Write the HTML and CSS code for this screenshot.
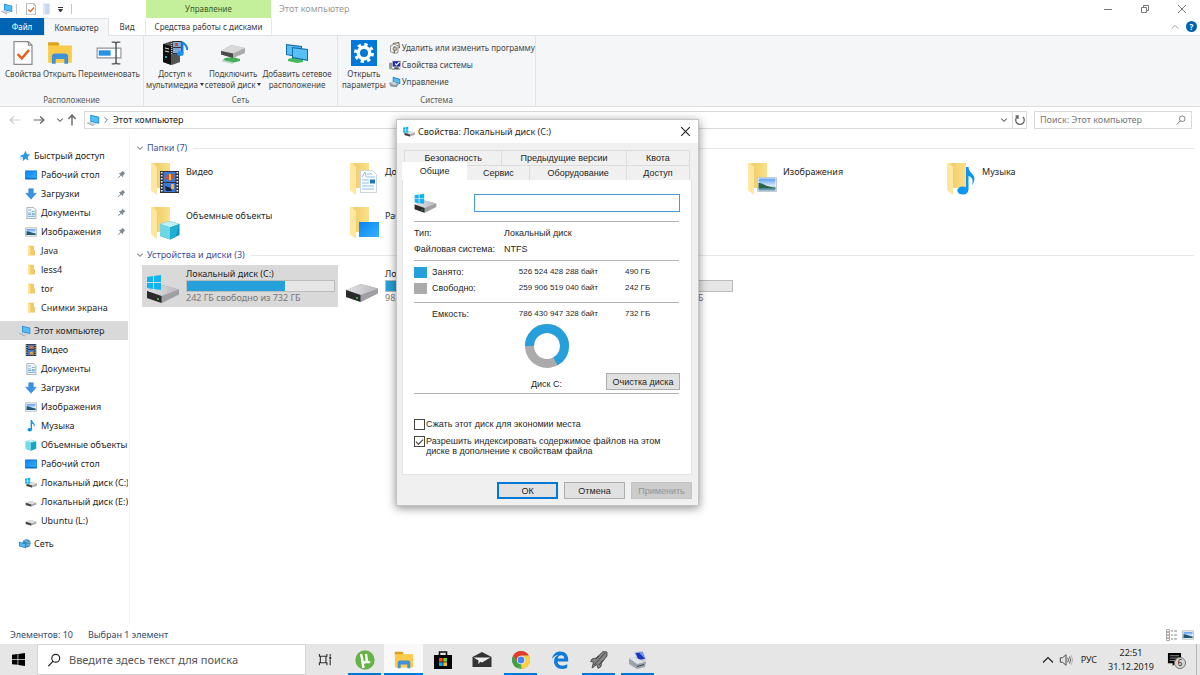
FILE: index.html
```html
<!DOCTYPE html>
<html lang="ru">
<head>
  <meta charset="UTF-8">
  <meta name="viewport" content="width=device-width, initial-scale=1.0">
  <title>Этот компьютер</title>
  <link rel="stylesheet" href="styles.css">
</head>
<body>
  <!-- Icon sprite -->
  <svg class="sprite" aria-hidden="true">
    <defs>
      <linearGradient id="g-folder" x1="0" x2="1"><stop offset="0" stop-color="#ffe9a6"/><stop offset=".3" stop-color="#f1cf6d"/><stop offset="1" stop-color="#fde08a"/></linearGradient>
      <linearGradient id="g-blue" x1="0" y1="0" x2="1" y2="1"><stop offset="0" stop-color="#0a84f0"/><stop offset="1" stop-color="#35b2ff"/></linearGradient>
      <linearGradient id="g-sky" x1="0" y1="0" x2="0" y2="1"><stop offset="0" stop-color="#5b9cf5"/><stop offset=".6" stop-color="#d6eafc"/><stop offset="1" stop-color="#3e7f9c"/></linearGradient>
      <linearGradient id="g-disk" x1="0" x2="1"><stop offset="0" stop-color="#e4e4e6"/><stop offset="1" stop-color="#b9b9bc"/></linearGradient>
    </defs>
    <symbol id="i-pc" viewBox="0 0 16 16"><path d="M4 1l11 2.500v8.500l-11-2.500z" fill="#1a8ad8"/><path d="M5 2.300l9 2v6.400l-9-2z" fill="#55bdf4"/><path d="M0 10.500l4-1 9 2.800-5 2z" fill="#c9d2d9"/><path d="M0 10.500l8 3.800v.9l-8-3.800z" fill="#8b979f"/></symbol>
    <symbol id="i-check" viewBox="0 0 16 20"><path d="M.5.500h12l3 3v16H.5z" fill="#fff" stroke="#8a8a8a"/><path d="M12.500.500v3h3" fill="none" stroke="#8a8a8a"/><path d="M3.500 11l3.500 3.500 6-7" fill="none" stroke="#ea5b21" stroke-width="2"/></symbol>
    <symbol id="i-page" viewBox="0 0 16 20"><path d="M3 1h11v18H3z" fill="#c7d7ee"/><path d="M3 1l4 2v16H3z" fill="#dde7f5"/></symbol>
    <symbol id="i-open" viewBox="0 0 24 22"><path d="M1 1h9l2 2h-1v3H1z" fill="#dba21a"/><path d="M1 4h22v16H1z" fill="#fccb4c"/><path d="M4.500 21v-8l2-1.500h11l2 1.500v8H16v-4.500H8V21z" fill="#3f91d8"/></symbol>
    <symbol id="i-rename" viewBox="0 0 24 22"><path d="M1 6.500h22v9H1z" fill="#fff" stroke="#8a9399"/><path d="M2.500 8.500h11v5h-11z" fill="#2592e8"/><path d="M14.500 1h3l1 1 1-1h3M18.500 2v18M14.500 21h3l1-1 1 1h3" fill="none" stroke="#505050" stroke-width="1.300"/></symbol>
    <symbol id="i-media" viewBox="0 0 26 26"><path d="M1 4l9-3 8 3v18l-8 3-9-3z" fill="#555"/><path d="M1 4l8 2v19l-8-3z" fill="#111"/><path d="M3 8l4 1M3 11l4 1" stroke="#ddd"/><circle cx="4" cy="17" r="1" fill="#2de"/><path d="M9 1h12v13H9z" fill="#333"/><path d="M11 2h8v5h-8zM11 8h8v5h-8z" fill="#7ea7d8"/><path d="M13 3h3v3h-3z" fill="#d64c35"/><path d="M9.700 1v13M20.300 1v13" stroke="#ddd" stroke-dasharray="1 1"/><path d="M20.500 2v11M21 2c1 3 5 3 4 8" fill="none" stroke="#1583e0" stroke-width="2"/><ellipse cx="18.500" cy="13.500" rx="3.200" ry="2.500" fill="#1b91ed"/></symbol>
    <symbol id="i-netdrive" viewBox="0 0 26 22"><path d="M5 16l8-1 7 2v2l-8 2-9-3z" fill="#41b15a"/><path d="M2 18l11 2v2L2 19.500z" fill="#b9d5bd"/><path d="M1 9l10-6 14 3v5l-12 5-12-4z" fill="#aaa"/><path d="M1 9l10-6 14 3-12 5.500z" fill="#d8d8d8"/><path d="M1 9l12 2.500V16L1 12.500z" fill="#4a4a4a"/></symbol>
    <symbol id="i-netplace" viewBox="0 0 26 22"><path d="M4 17l8-2 7 3v2l-6 1-9-2z" fill="#43b95b"/><path d="M2 2l16 2v12L2 13z" fill="#146da9"/><path d="M3 3.200l14 1.800v9.500L3 12.200z" fill="#55bdf4"/><path d="M8 5l16 2v12L8 16z" fill="#146da9"/><path d="M9 6.200l14 1.900v9.500L9 15.100z" fill="#58c0f6"/></symbol>
    <symbol id="i-gear" viewBox="0 0 26 26"><path d="M0 0h26v26H0z" fill="#0078d7"/><circle cx="13" cy="13" r="8.500" fill="none" stroke="#fff" stroke-width="3" stroke-dasharray="3.340 3.340"/><circle cx="13" cy="13" r="5.700" fill="none" stroke="#fff" stroke-width="3.400"/></symbol>
    <symbol id="i-uninstall" viewBox="0 0 16 16"><path d="M2 5l5-2 5 2v9l-5 1-5-2z" fill="#eee" stroke="#777"/><path d="M7 6v9M5 2l8-1 1 7" fill="none" stroke="#7b6a55" stroke-width="1.500"/><circle cx="8" cy="9" r="2.500" fill="#c8b9a2" stroke="#665"/></symbol>
    <symbol id="i-sysprops" viewBox="0 0 16 16"><path d="M4 2h12v9H4z" fill="#d5d5d5"/><path d="M5 3h10v7H5z" fill="#1726b4"/><path d="M8 6l2 2 4-4" fill="none" stroke="#fff" stroke-width="1.500"/><path d="M0 5h4v8H0z" fill="#999"/><path d="M7 11h6v2h2v1H4v-1h3z" fill="#555"/><path d="M1 13h4" stroke="#4bb34b"/></symbol>
    <symbol id="i-manage" viewBox="0 0 16 16"><path d="M5 1l10 3v7L5 8z" fill="#1580c8"/><path d="M6 2.500l8 2.400v4.700L6 7.200z" fill="#57bdf2"/><path d="M0 9l7-2 6 4-3 4-8-1z" fill="#8b9aa5"/><path d="M1 9l6-1 4 3-4 1z" fill="#d3dbe1"/></symbol>
    <symbol id="i-star" viewBox="0 0 16 16"><path d="M9 1l1.500 4.500L15 6l-3.500 3.200L13 14l-4.500-2.500L5 15l.5-5L1 8l5-2z" fill="#2596e8"/><path d="M1 9.500l3-.5M1.500 12.500l3-1.500" stroke="#74bdf0"/></symbol>
    <symbol id="i-desktop" viewBox="0 0 16 16"><path d="M.5 2.500h15v11H.5z" fill="url(#g-blue)" stroke="#0b74ca"/><path d="M1 12.500h14" stroke="#0a5fa8"/></symbol>
    <symbol id="i-down" viewBox="0 0 16 16"><path d="M5 1h6v6h4l-7 8-7-8h4z" fill="#3b93e6" stroke="#2a78c4" stroke-width=".7"/></symbol>
    <symbol id="i-doc" viewBox="0 0 16 16"><path d="M2.500.500h9l3 3v12h-12z" fill="#f2f6f9" stroke="#8a98a5"/><path d="M4 4h4M9 6h4M4 8h4M4 10h4M4 12.500h9" stroke="#4f9bd0"/><path d="M9 8h4v3H9z" fill="#7eb8df"/></symbol>
    <symbol id="i-picture" viewBox="0 0 16 16"><path d="M.5 2.500h15v11H.5z" fill="#fff" stroke="#9aa4aa"/><path d="M2 4h12v8H2z" fill="url(#g-sky)"/><path d="M2 7c4 0 6 2 12 3v2H2z" fill="#245878"/></symbol>
    <symbol id="i-folder-s" viewBox="0 0 16 16"><path d="M4 1h8v13H4z" fill="#f2cb65"/><path d="M4 1l3 2v12l-3-1z" fill="#ffe49a"/><path d="M12 7h1v7h-1z" fill="#e3b64b"/></symbol>
    <symbol id="i-film" viewBox="0 0 16 16"><path d="M1 0h14v16H1z" fill="#2c2c30"/><path d="M4 1h8v6H4zM4 8h8v7H4z" fill="#4779c8"/><path d="M7 2l3 1 1 3H6z" fill="#dc7a2c"/><path d="M6 11l4-1 1 4H7z" fill="#e2a63b"/><path d="M2.500 1v15M13.500 1v15" stroke="#e8e8e8" stroke-width="1.400" stroke-dasharray="1.500 1.500"/></symbol>
    <symbol id="i-note" viewBox="0 0 16 16"><path d="M7.500 0h1.800c0 3.500 4.700 3.500 3.400 8.500h-.9c.5-2.500-1-3.300-2.500-4V13H7.500z" fill="#0b93f0"/><ellipse cx="6.300" cy="13" rx="3" ry="2.300" fill="#0b93f0"/></symbol>
    <symbol id="i-cube" viewBox="0 0 16 16"><path d="M1 3l7-2 7 2v10l-7 2.500L1 13z" fill="#18a5c5"/><path d="M1 3l7 1.800V15.500L1 13z" fill="#74dbe8"/><path d="M1 3l7-2 7 2-7 1.800z" fill="#c9f4f7"/></symbol>
    <symbol id="i-drive-s" viewBox="0 0 16 16"><path d="M1 9l6-2.500 8 2v3L8 14 1 12z" fill="#aaa"/><path d="M1 9l6-2.500 8 2-6.500 2.700z" fill="#dfdfdf"/><path d="M1 9l7.300 2.200V14L1 12z" fill="#444"/></symbol>
    <symbol id="i-drive-win" viewBox="0 0 16 16"><use href="#i-drive-s" x="1" width="16" height="16"/><path d="M0 2l3-.5V5H0zM3.600 1.400L7 1v4H3.600zM0 5.600h3V9l-3-.5zM3.600 5.600H7V9l-3.400-.2z" fill="#14b4f0"/></symbol>
    <symbol id="i-network" viewBox="0 0 16 16"><circle cx="10" cy="7" r="5.500" fill="#3f8fc4"/><path d="M7 3c3 1 5 3 7 3M6 9c3 1 5 1 8-1" stroke="#a8d6ef" fill="none"/><path d="M0 5l9 2.500v6L0 11z" fill="#1580c8"/><path d="M1 6.300l7 2v4L1 10.300z" fill="#57bdf2"/></symbol>
    <symbol id="i-pin" viewBox="0 0 12 12"><path d="M7.500 1L11 4.500l-1 .5-1.500 1.700L8 9.500 5.500 7.300 2 10.800l-.8-.8L4.700 6.500 2.500 4l2.800-.5L7 2z" fill="#7d8992"/></symbol>
    <symbol id="i-folder" viewBox="0 0 30 34"><path d="M1 1h19v25H7v6z" fill="url(#g-folder)"/><path d="M1 1l6 4v28l-6-4.500z" fill="#ffe7a0"/></symbol>
    <symbol id="i-f-video" viewBox="0 0 30 34"><use href="#i-folder" width="30" height="34"/><path d="M10 9h19v22H10z" fill="#303036"/><path d="M13.500 10h12v10h-12zM13.500 21h12v9h-12z" fill="#3f78d6"/><path d="M17 12h7v3l-3 4-5-2z" fill="#d2502e"/><path d="M19 12h2v6h-2z" fill="#e9c03e"/><path d="M15 24l6 2 1 3h-6z" fill="#223"/><path d="M21 22h3v5h-3z" fill="#f0b33a"/><path d="M11.700 10v21M27.300 10v21" stroke="#f1f1f1" stroke-width="1.700" stroke-dasharray="1.500 1.500"/></symbol>
    <symbol id="i-f-doc" viewBox="0 0 30 34"><use href="#i-folder" width="30" height="34"/><path d="M11.500 8.500h12l4 4v18h-16z" fill="#fcfdff" stroke="#cdd5dd"/><path d="M13 15l3-5 1 5M18 12h5M18 15h8M13 18h7M13 21h7M13 24h12M13 27h12" stroke="#8fc2ea" fill="none"/><path d="M21 17.500h5v4h-5z" fill="#1d77bd"/></symbol>
    <symbol id="i-f-down" viewBox="0 0 30 34"><use href="#i-folder" width="30" height="34"/><path d="M17 12h7v9h5l-8.500 10L12 21h5z" fill="#2f8ee5"/></symbol>
    <symbol id="i-f-pic" viewBox="0 0 30 34"><use href="#i-folder" width="30" height="34"/><path d="M10.500 15.500h19v14h-19z" fill="#fff" stroke="#c2cbd2"/><path d="M11.500 16.500h17v12h-17z" fill="url(#g-sky)"/><path d="M11.500 21c5 0 8 4 17 4.500v1h-17z" fill="#2b6248"/></symbol>
    <symbol id="i-f-music" viewBox="0 0 30 34"><use href="#i-folder" width="30" height="34"/><path d="M20 5h2.500c0 6 7 7 5.800 13-.3 2-1.200 4-2.300 5.500 1.500-5 .4-8.500-3.500-9.500V28H20z" fill="#0b95f5"/><ellipse cx="16.800" cy="28.500" rx="5.500" ry="4" fill="#0b95f5"/></symbol>
    <symbol id="i-f-cube" viewBox="0 0 30 34"><use href="#i-folder" width="30" height="34"/><path d="M10 18l10-3 9.500 3v11l-9.500 4.500L10 30z" fill="#0d93b8"/><path d="M10 18l10 3.500v12L10 30z" fill="#6fd6e6"/><path d="M10 18l10-3 9.500 3-9.500 3.500z" fill="#bdf0f5"/><path d="M20 21.500l9.500-3.500-4 13-5.500 2.500z" fill="#20aed2"/></symbol>
    <symbol id="i-f-desk" viewBox="0 0 30 34"><use href="#i-folder" width="30" height="34"/><path d="M10 16h20v15H10z" fill="url(#g-blue)"/></symbol>
    <symbol id="i-drive" viewBox="0 0 34 34"><path d="M1 19l15-6 17 4.500v5L16 31 1 26z" fill="#9fa0a3"/><path d="M1 19l15-6 17 4.500L15.500 24z" fill="url(#g-disk)"/><path d="M1 19l14.500 5v7L1 26z" fill="#2b2b2d"/><circle cx="12" cy="27" r="1" fill="#4cd04c"/></symbol>
    <symbol id="i-drive-c" viewBox="0 0 34 34"><use href="#i-drive" y="1" width="34" height="34"/><path d="M1 6l6-.9v6H1zM8 5l7-1v7H8zM1 12h6v6l-6-.9zM8 12h7v7l-7-.9z" fill="#12b5f2"/></symbol>
    <symbol id="i-back" viewBox="0 0 12 12"><path d="M11.500 6H1M5 2.500L1 6l4 3.500" fill="none" stroke="currentColor" stroke-width="1.200"/></symbol>
    <symbol id="i-fwd" viewBox="0 0 12 12"><path d="M.5 6H11M7 2.500L11 6 7 9.500" fill="none" stroke="currentColor" stroke-width="1.200"/></symbol>
    <symbol id="i-up" viewBox="0 0 12 12"><path d="M6 11.500V1M2.500 5L6 1l3.500 4" fill="none" stroke="currentColor" stroke-width="1.400"/></symbol>
    <symbol id="i-chev" viewBox="0 0 12 12"><path d="M2 4l4 4 4-4" fill="none" stroke="currentColor" stroke-width="1.600"/></symbol>
    <symbol id="i-chev-r" viewBox="0 0 12 12"><path d="M4 2l4 4-4 4" fill="none" stroke="currentColor" stroke-width="1.400"/></symbol>
    <symbol id="i-chev-u" viewBox="0 0 12 12"><path d="M1 8.500l5-5 5 5" fill="none" stroke="currentColor" stroke-width="1.200"/></symbol>
    <symbol id="i-refresh" viewBox="0 0 12 12"><path d="M3.200 2.800A4.300 4.300 0 1 0 9 3M1.500 2H4v3" fill="none" stroke="currentColor" stroke-width="1.300"/></symbol>
    <symbol id="i-search" viewBox="0 0 16 16"><circle cx="10" cy="6" r="4.500" fill="none" stroke="currentColor" stroke-width="1.300"/><path d="M7 9.300L1.500 15" stroke="currentColor" stroke-width="1.500"/></symbol>
    <symbol id="i-close" viewBox="0 0 12 12"><path d="M2 2l8 8M10 2l-8 8" stroke="currentColor"/></symbol>
    <symbol id="i-min" viewBox="0 0 12 12"><path d="M2 6.500h8" stroke="currentColor"/></symbol>
    <symbol id="i-restore" viewBox="0 0 12 12"><path d="M2.500 4.500h5v5h-5zM4.500 4.500v-2h5v5h-2" fill="none" stroke="currentColor"/></symbol>
    <symbol id="i-win" viewBox="0 0 14 14"><path d="M0 2l6-.8v5.300H0zM6.800 1.100L14 0v6.500H6.800zM0 7.300h6v5.400L0 12zM6.800 7.300H14V14l-7.200-1z" fill="#000"/></symbol>
    <symbol id="i-taskview" viewBox="0 0 16 16"><path d="M1.500 2v2.500h8V2M1.500 14v-2.500h8V14M2.500 4.500v7M8.500 4.500v7M13 2v3M13 8v6" fill="none" stroke="#333" stroke-width="1.200"/><circle cx="13" cy="6.500" r="1.300" fill="#333"/></symbol>
    <symbol id="i-utorrent" viewBox="0 0 20 20"><circle cx="10" cy="10" r="9.700" fill="#65b345"/><path d="M6 4l1.500 6.500c.8 3 3.500 2.500 4.300 0L11 4M11.500 10c1 3 2.500 2.500 3.500 1.500M7 10l1.500 8" fill="none" stroke="#fff" stroke-width="2.400"/></symbol>
    <symbol id="i-store" viewBox="0 0 20 20"><path d="M6.500 6V2h7v4" fill="none" stroke="#111" stroke-width="1.600"/><path d="M1 5h18v14H1z" fill="#050505"/><path d="M6 8h3.700v3.700H6z" fill="#f1511b"/><path d="M10.300 8H14v3.700h-3.700z" fill="#80cc28"/><path d="M6 12.300h3.700V16H6z" fill="#00adef"/><path d="M10.300 12.300H14V16h-3.700z" fill="#fbbc09"/></symbol>
    <symbol id="i-mail" viewBox="0 0 20 20"><path d="M.5 7L10 2l9.500 5v10H.5z" fill="#333"/><path d="M1.500 7.500h17L10 12.500l-1.700-.8-2 2.500.2-3.600z" fill="#eee"/></symbol>
    <symbol id="i-chrome" viewBox="0 0 20 20"><circle cx="10" cy="10" r="9" fill="#4caf50"/><path d="M10 10L2.200 5.500A9 9 0 0 1 17.800 5.500z" fill="#e33b2e"/><path d="M2.200 5.500l4.300 7L10 5.500z" fill="#e33b2e"/><path d="M10 10l.5 9A9 9 0 0 0 17.800 5.500H10z" fill="#fdd03b"/><path d="M2.200 5.500L6 12l4 2.500L6 18A9 9 0 0 1 2.200 5.500z" fill="#43a047"/><circle cx="10" cy="10" r="4.200" fill="#fff"/><circle cx="10" cy="10" r="3.400" fill="#4286f4"/></symbol>
    <symbol id="i-edge" viewBox="0 0 20 20"><path d="M2 9c.8-5 4.200-7.500 8.200-7.500 5 0 8 3.500 8 8.300v1.700H7.500c.2 4.800 6.500 5 9.700 2.700v3.600c-5.500 3-13.200.5-13.200-6.500 0-3 1.600-5.200 4.500-6.500C5.500 5.300 3.500 6.800 2 9zM7.700 8.500h6.500c0-4.600-6-4-6.500 0z" fill="#0f7bd8"/></symbol>
    <symbol id="i-rocket" viewBox="0 0 20 20"><path d="M18 2l-4-.5L7 8l-4 1-1.500 2.500 3 .5L3 18l5-3.500 1 4 3-2 .5-3.500L18 6z" fill="#858585" stroke="#3a3a3a" stroke-width=".8"/><path d="M16 3L5 15M10 6l-3 3M14 10l-4 5" stroke="#444" fill="none"/></symbol>
    <symbol id="i-oldpc" viewBox="0 0 20 20"><path d="M6 2l9-1 3.500 9-9 2z" fill="#c5cbd3"/><path d="M7.500 3l7-.8 2.500 6.500-6.500 1.300z" fill="#1a35c0"/><path d="M11 2.500l3.500-.3 2.500 6.500z" fill="#7ea0ee"/><path d="M1 8l5-1 12 5-1 5-8 2-8-5z" fill="#9aa3ae"/><path d="M1 8l5-1 11 5-8 2z" fill="#e1e5ea"/><path d="M9 16.500l7-2" stroke="#444"/></symbol>
    <symbol id="i-sound" viewBox="0 0 16 16"><path d="M1.500 5.500H4l4-3.500v12l-4-3.500H1.500z" fill="none" stroke="#333"/><path d="M10 5.500q1.500 2.500 0 5M12 4q2.500 4 0 8" fill="none" stroke="#444"/><path d="M14 2.500q3 5.500 0 11" fill="none" stroke="#aaa"/></symbol>
    <symbol id="i-notify" viewBox="0 0 16 16"><path d="M1 1h14v11H9l-3 3v-3H1z" fill="#000"/><path d="M3 4h10M3 6.500h10M3 9h10" stroke="#999"/></symbol>
    <symbol id="i-list" viewBox="0 0 12 12"><path d="M1.500.500h3v11h-3z" fill="none" stroke="#a9a9a9"/><path d="M2 3h2M2 6h2M2 9h2" stroke="#a25a5a"/><path d="M6 2h2M9 2h3M6 6h2M9 6h3M6 10h2M9 10h3" stroke="#888"/></symbol>
  </svg>

  <div class="explorer">
    <header class="titlebar">
      <div class="quick-access">
        <svg class="icon-sm"><use href="#i-pc"/></svg>
        <span class="divider"></span>
        <svg class="icon-sm"><use href="#i-check"/></svg>
        <svg class="icon-sm"><use href="#i-page"/></svg>
        <button class="qa-more" aria-label="Настройка панели"></button>
        <span class="divider"></span>
      </div>
      <div class="context-title">Управление</div>
      <h1 class="window-title">Этот компьютер</h1>
      <div class="window-controls">
        <button aria-label="Свернуть"><svg class="icon-sm"><use href="#i-min"/></svg></button>
        <button aria-label="Восстановить"><svg class="icon-sm"><use href="#i-restore"/></svg></button>
        <button aria-label="Закрыть"><svg class="icon-sm"><use href="#i-close"/></svg></button>
      </div>
    </header>

    <nav class="ribbon-tabs">
      <a href="#" class="tab-file">Файл</a>
      <a href="#" class="tab-computer">Компьютер</a>
      <a href="#" class="tab-view">Вид</a>
      <a href="#" class="tab-drive">Средства работы с дисками</a>
      <button class="collapse" aria-label="Свернуть ленту"><svg class="icon-xs"><use href="#i-chev-u"/></svg></button>
      <button class="help" aria-label="Справка">?</button>
    </nav>

    <section class="ribbon">
      <div class="ribbon-group group-location">
        <div class="ribbon-items">
          <button class="big-btn"><svg><use href="#i-check"/></svg>Свойства</button>
          <button class="big-btn"><svg><use href="#i-open"/></svg>Открыть</button>
          <button class="big-btn"><svg><use href="#i-rename"/></svg>Переименовать</button>
        </div>
        <div class="group-name">Расположение</div>
      </div>
      <div class="ribbon-group group-network">
        <div class="ribbon-items">
          <button class="big-btn"><svg><use href="#i-media"/></svg>Доступ к<br><span class="drop">мультимедиа</span></button>
          <button class="big-btn"><svg><use href="#i-netdrive"/></svg>Подключить<br><span class="drop">сетевой диск</span></button>
          <button class="big-btn"><svg><use href="#i-netplace"/></svg>Добавить сетевое<br>расположение</button>
        </div>
        <div class="group-name">Сеть</div>
      </div>
      <div class="ribbon-group group-system">
        <div class="ribbon-items">
          <button class="big-btn"><svg><use href="#i-gear"/></svg>Открыть<br>параметры</button>
          <div class="small-btns">
            <button><svg class="icon-sm"><use href="#i-uninstall"/></svg>Удалить или изменить программу</button>
            <button><svg class="icon-sm"><use href="#i-sysprops"/></svg>Свойства системы</button>
            <button><svg class="icon-sm"><use href="#i-manage"/></svg>Управление</button>
          </div>
        </div>
        <div class="group-name">Система</div>
      </div>
    </section>

    <div class="navbar">
      <button class="back" aria-label="Назад"><svg class="icon-sm"><use href="#i-back"/></svg></button>
      <button class="forward" aria-label="Вперед"><svg class="icon-sm"><use href="#i-fwd"/></svg></button>
      <button class="recent" aria-label="Последние"><svg class="icon-xs"><use href="#i-chev"/></svg></button>
      <button class="up" aria-label="Вверх"><svg class="icon-sm"><use href="#i-up"/></svg></button>
      <div class="address">
        <svg class="icon-md"><use href="#i-pc"/></svg>
        <svg class="icon-xs"><use href="#i-chev-r"/></svg>
        <a href="#">Этот компьютер</a>
        <button aria-label="Предыдущие расположения"><svg class="icon-xs"><use href="#i-chev"/></svg></button>
        <button class="refresh" aria-label="Обновить"><svg class="icon-sm"><use href="#i-refresh"/></svg></button>
      </div>
      <label class="search">
        <input type="text" placeholder="Поиск: Этот компьютер" aria-label="Поиск">
        <svg class="icon-search"><use href="#i-search"/></svg>
      </label>
    </div>

    <div class="content">
      <aside class="sidebar">
        <ul>
          <li class="root"><a href="#"><svg class="icon-sm"><use href="#i-star"/></svg>Быстрый доступ</a></li>
          <li><a href="#"><svg class="icon-sm"><use href="#i-desktop"/></svg>Рабочий стол<svg class="pin"><use href="#i-pin"/></svg></a></li>
          <li><a href="#"><svg class="icon-sm"><use href="#i-down"/></svg>Загрузки<svg class="pin"><use href="#i-pin"/></svg></a></li>
          <li><a href="#"><svg class="icon-sm"><use href="#i-doc"/></svg>Документы<svg class="pin"><use href="#i-pin"/></svg></a></li>
          <li><a href="#"><svg class="icon-sm"><use href="#i-picture"/></svg>Изображения<svg class="pin"><use href="#i-pin"/></svg></a></li>
          <li><a href="#"><svg class="icon-sm"><use href="#i-folder-s"/></svg>Java</a></li>
          <li><a href="#"><svg class="icon-sm"><use href="#i-folder-s"/></svg>less4</a></li>
          <li><a href="#"><svg class="icon-sm"><use href="#i-folder-s"/></svg>tor</a></li>
          <li><a href="#"><svg class="icon-sm"><use href="#i-folder-s"/></svg>Снимки экрана</a></li>
        </ul>
        <ul>
          <li class="root selected"><a href="#"><svg class="icon-sm"><use href="#i-pc"/></svg>Этот компьютер</a></li>
          <li><a href="#"><svg class="icon-sm"><use href="#i-film"/></svg>Видео</a></li>
          <li><a href="#"><svg class="icon-sm"><use href="#i-doc"/></svg>Документы</a></li>
          <li><a href="#"><svg class="icon-sm"><use href="#i-down"/></svg>Загрузки</a></li>
          <li><a href="#"><svg class="icon-sm"><use href="#i-picture"/></svg>Изображения</a></li>
          <li><a href="#"><svg class="icon-sm"><use href="#i-note"/></svg>Музыка</a></li>
          <li><a href="#"><svg class="icon-sm"><use href="#i-cube"/></svg>Объемные объекты</a></li>
          <li><a href="#"><svg class="icon-sm"><use href="#i-desktop"/></svg>Рабочий стол</a></li>
          <li><a href="#"><svg class="icon-sm"><use href="#i-drive-win"/></svg>Локальный диск (C:)</a></li>
          <li><a href="#"><svg class="icon-sm"><use href="#i-drive-s"/></svg>Локальный диск (E:)</a></li>
          <li><a href="#"><svg class="icon-sm"><use href="#i-drive-s"/></svg>Ubuntu (L:)</a></li>
        </ul>
        <ul>
          <li class="root"><a href="#"><svg class="icon-sm"><use href="#i-network"/></svg>Сеть</a></li>
        </ul>
      </aside>

      <main class="files">
        <section>
          <h2><svg class="icon-xs"><use href="#i-chev"/></svg>Папки (7)</h2>
          <div class="tiles">
            <a href="#" class="tile"><svg><use href="#i-f-video"/></svg><span>Видео</span></a>
            <a href="#" class="tile"><svg><use href="#i-f-doc"/></svg><span>Документы</span></a>
            <a href="#" class="tile"><svg><use href="#i-f-down"/></svg><span>Загрузки</span></a>
            <a href="#" class="tile"><svg><use href="#i-f-pic"/></svg><span>Изображения</span></a>
            <a href="#" class="tile"><svg><use href="#i-f-music"/></svg><span>Музыка</span></a>
            <a href="#" class="tile"><svg><use href="#i-f-cube"/></svg><span>Объемные объекты</span></a>
            <a href="#" class="tile"><svg><use href="#i-f-desk"/></svg><span>Рабочий стол</span></a>
          </div>
        </section>
        <section>
          <h2><svg class="icon-xs"><use href="#i-chev"/></svg>Устройства и диски (3)</h2>
          <div class="tiles">
            <a href="#" class="tile drive selected">
              <svg><use href="#i-drive-c"/></svg>
              <span>Локальный диск (C:)<span class="bar"><span style="width: 67%"></span></span><small>242 ГБ свободно из 732 ГБ</small></span>
            </a>
            <a href="#" class="tile drive">
              <svg><use href="#i-drive"/></svg>
              <span>Локальный диск (E:)<span class="bar"><span style="width: 50%"></span></span><small>98,2 ГБ свободно из 198 ГБ</small></span>
            </a>
            <a href="#" class="tile drive">
              <svg><use href="#i-drive"/></svg>
              <span>Ubuntu (L:)<span class="bar"><span style="width: 10%"></span></span><small>18,1 ГБ свободно из 20,6 ГБ</small></span>
            </a>
          </div>
        </section>
      </main>
    </div>

    <footer class="statusbar">
      <span>Элементов: 10</span>
      <span>Выбран 1 элемент</span>
      <div class="view-modes">
        <button aria-label="Таблица"><svg class="icon-sm"><use href="#i-list"/></svg></button>
        <button aria-label="Крупные значки"><svg class="icon-sm"><use href="#i-picture"/></svg></button>
      </div>
    </footer>
  </div>

  <!-- Disk properties window -->
  <div class="dialog" role="dialog" aria-labelledby="dialog-title">
    <div class="dialog-title">
      <svg class="icon-sm"><use href="#i-drive-win"/></svg>
      <h2 id="dialog-title">Свойства: Локальный диск (C:)</h2>
      <button aria-label="Закрыть"><svg class="icon-md"><use href="#i-close"/></svg></button>
    </div>
    <div class="dialog-body">
      <div class="tabs tabs-back">
        <button>Безопасность</button>
        <button>Предыдущие версии</button>
        <button>Квота</button>
      </div>
      <div class="tabs tabs-front">
        <button class="active">Общие</button>
        <button>Сервис</button>
        <button>Оборудование</button>
        <button>Доступ</button>
      </div>
      <div class="panel">
        <div class="name-row">
          <svg><use href="#i-drive-c"/></svg>
          <input type="text" aria-label="Метка тома">
        </div>
        <hr>
        <table class="info">
          <tr><td>Тип:</td><td>Локальный диск</td></tr>
          <tr><td>Файловая система:</td><td>NTFS</td></tr>
        </table>
        <hr>
        <table class="usage">
          <tr><td><span class="swatch used"></span></td><td>Занято:</td><td>526 524 428 288 байт</td><td>490 ГБ</td></tr>
          <tr><td><span class="swatch free"></span></td><td>Свободно:</td><td>259 906 519 040 байт</td><td>242 ГБ</td></tr>
        </table>
        <hr>
        <table class="usage">
          <tr><td></td><td>Емкость:</td><td>786 430 947 328 байт</td><td>732 ГБ</td></tr>
        </table>
        <svg class="donut" viewBox="0 0 44 44">
          <circle cx="22" cy="22" r="17.500" fill="none" stroke="#ababab" stroke-width="9"/>
          <circle cx="22" cy="22" r="17.500" fill="none" stroke="#26a0da" stroke-width="9" pathLength="100" stroke-dasharray="67 33" transform="rotate(180 22 22)"/>
        </svg>
        <div class="disk-row">
          <span>Диск C:</span>
          <button class="btn">Очистка диска</button>
        </div>
        <hr>
        <div class="options">
          <label><input type="checkbox"><span>Сжать этот диск для экономии места</span></label>
          <label><input type="checkbox" checked><span>Разрешить индексировать содержимое файлов на этом диске в дополнение к свойствам файла</span></label>
        </div>
      </div>
      <div class="dialog-buttons">
        <button class="btn default">ОК</button>
        <button class="btn">Отмена</button>
        <button class="btn" disabled>Применить</button>
      </div>
    </div>
  </div>

  <div class="taskbar">
    <button class="start" aria-label="Пуск"><svg><use href="#i-win"/></svg></button>
    <label class="task-search">
      <svg><use href="#i-search"/></svg>
      <input type="text" placeholder="Введите здесь текст для поиска" aria-label="Поиск Windows">
    </label>
    <button class="task-view" aria-label="Представление задач"><svg><use href="#i-taskview"/></svg></button>
    <div class="apps">
      <button class="running" aria-label="uTorrent"><svg><use href="#i-utorrent"/></svg></button>
      <button class="running current" aria-label="Проводник"><svg><use href="#i-open"/></svg></button>
      <button aria-label="Магазин"><svg><use href="#i-store"/></svg></button>
      <button aria-label="Почта"><svg><use href="#i-mail"/></svg></button>
      <button class="running" aria-label="Chrome"><svg><use href="#i-chrome"/></svg></button>
      <button aria-label="Edge"><svg><use href="#i-edge"/></svg></button>
      <button class="running" aria-label="Ракета"><svg><use href="#i-rocket"/></svg></button>
      <button class="running" aria-label="Компьютер"><svg><use href="#i-oldpc"/></svg></button>
    </div>
    <div class="tray">
      <button aria-label="Скрытые значки"><svg class="icon-sm"><use href="#i-chev-u"/></svg></button>
      <button aria-label="Громкость"><svg class="icon-lg"><use href="#i-sound"/></svg></button>
      <span class="lang">РУС</span>
      <time class="clock">22:51<br>31.12.2019</time>
      <button class="notify" aria-label="Уведомления"><svg><use href="#i-notify"/></svg><span class="badge">6</span></button>
      <span class="show-desktop"></span>
    </div>
  </div>
</body>
</html>
```
FILE: styles.css
```css
*, *::before, *::after {
  box-sizing: border-box;
  margin: 0;
  padding: 0;
}

:root {
  --accent: #26a0da;
  --blue: #0078d7;
  --border: #d9d9d9;
  --selected: #d9d9d9;
  --ribbon: #f5f6f7;
  --ui-font: 'Noto Sans', 'Open Sans', sans-serif;
  --dialog-font: 'Liberation Sans', Arial, sans-serif;
}

body {
  font-family: var(--ui-font);
  font-size: 9px;
  line-height: 12px;
  color: #1f1f1f;
  background: #fff;
  min-height: 100vh;
  display: flex;
  flex-direction: column;
  overflow: hidden;
}

button, input {
  font: inherit;
  color: inherit;
  background: none;
  border: 0;
  outline: 0;
}

a {
  color: inherit;
  text-decoration: none;
}

ul {
  list-style: none;
}

svg {
  display: block;
  flex: none;
}

.sprite {
  position: absolute;
  width: 0;
  height: 0;
}

.icon-xs { width: 8px; height: 8px; }
.icon-search { width: 10px; height: 10px; }
.icon-sm { width: 12px; height: 12px; }
.icon-md { width: 13px; height: 13px; }
.icon-lg { width: 14px; height: 14px; }

.explorer {
  flex: 1;
  display: flex;
  flex-direction: column;
}

/* Title bar */
.titlebar {
  display: flex;
  height: 18px;
}

.quick-access {
  display: flex;
  align-items: center;
  gap: 3px;
  width: 146px;
  padding-left: 1px;
}

.divider {
  width: 1px;
  height: 10px;
  background: #c5c5c5;
}

.divider + svg {
  margin-left: 5px;
}

.qa-more {
  width: 5px;
  height: 5px;
  border-top: 1px solid #333;
  margin: 1px 5px 0 3px;
}

.qa-more::after,
.drop::after {
  content: '';
  display: block;
  border: 2px solid transparent;
  border-top: 3px solid #333;
  border-bottom: 0;
  margin-top: 1px;
}

.context-title {
  width: 125px;
  background: #c4f09b;
  text-align: center;
  font-size: 8px;
  line-height: 18px;
  color: #3c5a2c;
}

.window-title {
  flex: 1;
  padding-left: 8px;
  font-size: 9px;
  font-weight: 400;
  line-height: 18px;
  color: #999;
}

.window-controls {
  display: flex;
  color: #777;
}

.window-controls button {
  width: 37px;
  display: grid;
  place-items: center;
}

/* Ribbon */
.ribbon-tabs {
  display: flex;
  height: 18px;
  font-size: 8px;
  line-height: 18px;
  text-align: center;
  color: #3b3b3b;
  border-bottom: 1px solid #e3e4e5;
}

.tab-file {
  width: 44px;
  background: #0063b1;
  color: #fff;
}

.tab-computer {
  width: 65px;
  height: 18px;
  background: var(--ribbon);
  border: 1px solid #e3e4e5;
  border-bottom: 0;
  line-height: 17px;
}

.tab-view {
  width: 36px;
}

.tab-drive {
  width: 127px;
  border: 1px solid #e9e9e9;
  border-width: 0 1px;
}

.collapse {
  margin-left: auto;
  color: #888;
}

.help {
  align-self: center;
  width: 11px;
  height: 11px;
  margin: 0 3px 0 7px;
  border-radius: 50%;
  background: #0063b1;
  color: #fff;
  font-size: 8px;
  font-weight: 700;
  line-height: 11px;
}

.ribbon {
  display: flex;
  height: 71px;
  background: var(--ribbon);
  border-bottom: 1px solid #dcddde;
  font-size: 8px;
  line-height: 11px;
  color: #444;
}

.ribbon-group {
  display: flex;
  flex-direction: column;
  justify-content: space-between;
  padding-bottom: 1px;
  border-right: 1px solid #e2e3e4;
}

.ribbon-items {
  display: flex;
  padding-top: 3px;
}

.group-location { width: 144px; }
.group-network { width: 194px; }
.group-system { width: 198px; }

.group-name {
  text-align: center;
  color: #5a5a5a;
}

.big-btn {
  display: block;
  white-space: nowrap;
}

.big-btn svg {
  width: 26px;
  height: 26px;
  margin: 1px auto 2px;
}

.group-location .ribbon-items {
  padding-left: 5px;
  gap: 2px;
}

.group-location .big-btn svg {
  height: 24px;
  margin: 2px auto 3px;
}

.group-network .ribbon-items {
  padding-left: 2px;
  gap: 1px;
}

.group-system .ribbon-items {
  padding-left: 4px;
  gap: 3px;
}

.drop::after {
  display: inline-block;
  margin: 0 0 2px 2px;
}

.small-btns {
  display: flex;
  flex-direction: column;
}

.small-btns button {
  display: flex;
  align-items: center;
  gap: 1px;
  height: 17px;
  white-space: nowrap;
}

/* Address bar */
.navbar {
  display: flex;
  align-items: center;
  height: 26px;
  padding: 0 8px;
  color: #666;
}

.navbar button {
  display: grid;
  place-items: center;
  width: 12px;
}

.navbar .back {
  width: 14px;
  color: #ccc;
}

.navbar .forward {
  width: 34px;
}

.navbar .recent {
  width: 4px;
}

.navbar .up {
  width: 24px;
}

.address {
  flex: 1;
  display: flex;
  align-items: center;
  gap: 2px;
  height: 18px;
  padding-left: 2px;
  border: 1px solid var(--border);
}

.address a {
  flex: 1;
  padding-left: 1px;
  color: #222;
}

.address .refresh {
  width: 14px;
  height: 16px;
  border-left: 1px solid var(--border);
}

.search {
  display: flex;
  align-items: center;
  width: 158px;
  height: 18px;
  margin-left: 7px;
  padding: 0 5px;
  border: 1px solid var(--border);
}

.search input {
  flex: 1;
  min-width: 0;
}

::placeholder {
  color: #777;
  opacity: 1;
}

/* Navigation pane */
.content {
  flex: 1;
  display: flex;
}

.sidebar {
  width: 130px;
  padding-top: 13px;
  border-right: 1px solid #f2f2f2;
}

.sidebar ul {
  margin-bottom: 4px;
}

.sidebar a {
  display: flex;
  align-items: center;
  gap: 4px;
  height: 19px;
  width: 128px;
  padding-left: 25px;
  white-space: nowrap;
  overflow: hidden;
}

.sidebar .root a {
  gap: 3px;
  padding-left: 19px;
}

.sidebar .selected a {
  background: var(--selected);
}

.pin {
  width: 9px;
  height: 9px;
  margin: 0 2px 0 auto;
}

/* Folder view */
.files {
  flex: 1;
  padding: 8px 6px 0;
}

.files h2 {
  display: flex;
  align-items: center;
  gap: 3px;
  font-size: 9px;
  font-weight: 400;
  line-height: 14px;
  color: #3b4fa0;
}

.files h2 svg {
  color: #888;
}

.files h2::after {
  content: '';
  flex: 1;
  height: 1px;
  margin-left: 3px;
  background: #e8e8e8;
}

.tiles {
  display: grid;
  grid-template-columns: repeat(auto-fill, 196px);
  gap: 2px 3px;
  padding: 3px 6px 4px;
}

.tile {
  display: flex;
  gap: 6px;
  height: 42px;
  padding: 4px 3px 0 8px;
}

.tile > svg {
  width: 30px;
  height: 34px;
}

.tile > span {
  flex: 1;
  padding-top: 4px;
}

.drive {
  padding: 0 3px 0 4px;
}

.drive > svg {
  width: 34px;
  height: 34px;
  margin-top: 6px;
}

.drive > span {
  padding-top: 3px;
}

.drive.selected {
  background: var(--selected);
}

.bar {
  display: block;
  height: 12px;
  border: 1px solid #bcbcbc;
  background: #e6e6e6;
}

.bar span {
  display: block;
  height: 10px;
  background: var(--accent);
}

.drive small {
  font-size: 9px;
  color: #777;
}

/* Status bar */
.statusbar {
  display: flex;
  align-items: center;
  gap: 15px;
  height: 19px;
  padding: 0 6px 0 10px;
  color: #33496b;
}

.view-modes {
  display: flex;
  gap: 5px;
  margin-left: auto;
}

/* Properties dialog */
.dialog {
  position: absolute;
  top: 119px;
  left: 396px;
  width: 303px;
  font-family: var(--dialog-font);
  background: #f0f0f0;
  border: 1px solid #c4c4c4;
  box-shadow: 0 2px 9px rgba(0, 0, 0, 0.45);
}

.dialog-title {
  display: flex;
  align-items: center;
  gap: 3px;
  height: 23px;
  padding: 0 6px;
  background: #fff;
  font-family: var(--ui-font);
}

.dialog-title h2 {
  flex: 1;
  font-size: 9px;
  font-weight: 400;
}

.dialog-body {
  padding: 7px 6px 6px 5px;
}

.tabs {
  display: grid;
  margin: 0 2px;
}

.tabs button {
  height: 15px;
  line-height: 15px;
  border: 1px solid #dcdcdc;
  border-width: 1px 1px 0 0;
}

.tabs button:first-child {
  border-left-width: 1px;
}

.tabs-back {
  grid-template-columns: 98fr 124fr 63fr;
}

.tabs-front {
  grid-template-columns: 63fr 63fr 96fr 63fr;
}

.tabs .active {
  height: 18px;
  margin: -3px 0 0 -2px;
  border-color: #fff;
  background: #fff;
}

.panel {
  padding: 11px 11px 18px;
  background: #fff;
  border: 1px solid #e3e3e3;
  border-top: 0;
}

.panel hr {
  border: 0;
  border-top: 1px solid #b4b4b4;
  margin: 3px 1px 3px 0;
}

.name-row {
  display: flex;
  justify-content: space-between;
  align-items: center;
  margin-bottom: 7px;
}

.name-row svg {
  width: 23px;
  height: 23px;
}

.name-row input {
  width: 206px;
  height: 18px;
  border: 1px solid #4a98dc;
}

.panel table {
  width: 100%;
  border-collapse: collapse;
  table-layout: fixed;
}

.panel td {
  height: 16px;
  white-space: nowrap;
}

.info td:first-child {
  width: 90px;
}

.panel .usage + hr {
  margin-top: 6px;
}

.usage td:nth-child(1) { width: 18px; }
.usage td:nth-child(2) { width: 66px; }
.usage td:nth-child(3) { width: 100px; font-size: 8px; text-align: right; }
.usage td:nth-child(4) { padding-left: 27px; font-size: 8px; }

.swatch {
  display: block;
  width: 13px;
  height: 11px;
}

.used { background: var(--accent); }
.free { background: #ababab; }

.donut {
  width: 44px;
  height: 44px;
  margin: 2px auto 5px;
}

.disk-row {
  display: grid;
  grid-template-columns: 1fr 32px 1fr;
  align-items: end;
  white-space: nowrap;
}

.disk-row span {
  grid-column: 2;
}

.disk-row .btn {
  justify-self: end;
  width: 74px;
}

.btn {
  width: 61px;
  height: 17px;
  border: 1px solid #adadad;
  background: #e1e1e1;
}

.btn.default {
  border: 2px solid var(--blue);
}

.btn:disabled {
  background: #ccc;
  border-color: #c4c4c4;
  color: #929292;
}

.options {
  display: grid;
  gap: 6px;
  padding-top: 22px;
  line-height: 10px;
}

.options label {
  display: flex;
  gap: 1px;
}

.options input {
  appearance: none;
  flex: none;
  width: 11px;
  height: 11px;
  border: 1px solid #444;
}

.options input:checked::after {
  content: '';
  display: block;
  width: 7px;
  height: 4px;
  margin: 2px 1px;
  border: solid #333;
  border-width: 0 0 1px 1px;
  transform: rotate(-45deg);
}

.dialog-buttons {
  display: flex;
  justify-content: flex-end;
  gap: 6px;
  padding-top: 7px;
}

/* Taskbar */
.taskbar {
  display: flex;
  height: 31px;
  background: #e6e6e6;
}

.taskbar button {
  display: grid;
  place-items: center;
}

.start {
  width: 37px;
}

.start svg {
  width: 13px;
  height: 13px;
}

.task-search {
  display: flex;
  align-items: center;
  gap: 8px;
  width: 269px;
  padding-left: 9px;
  background: #fff;
  border: 1px solid #d5d5d5;
}

.task-search svg {
  width: 14px;
  height: 14px;
  color: #222;
}

.task-search input {
  flex: 1;
  font-size: 11px;
}

.task-search ::placeholder {
  color: #555;
}

.task-view {
  width: 39px;
}

.task-view svg {
  width: 15px;
  height: 15px;
}

.apps {
  display: flex;
}

.apps button {
  width: 39px;
  border: 3px solid transparent;
  border-top-width: 0;
  border-bottom: 0;
}

.apps button.running {
  background: linear-gradient(var(--blue), var(--blue)) bottom / 100% 2px no-repeat;
}

.apps button.current {
  border-width: 0;
  background-color: #f9f9f9;
}

.apps svg {
  width: 20px;
  height: 20px;
}

.tray {
  display: flex;
  align-items: center;
  gap: 5px;
  margin-left: auto;
}

.lang {
  padding: 0 6px 0 3px;
}

.clock {
  text-align: center;
  line-height: 14px;
}

.notify {
  position: relative;
  margin: 0 9px 0 8px;
}

.notify svg {
  width: 15px;
  height: 15px;
}

.badge {
  position: absolute;
  left: 7px;
  top: 5px;
  width: 12px;
  height: 12px;
  border: 1px solid #777;
  border-radius: 50%;
  background: #d5d5d5;
  font-size: 8px;
  line-height: 10px;
}

.show-desktop {
  width: 4px;
  align-self: stretch;
  border-left: 1px solid #b5b5b5;
}
```
